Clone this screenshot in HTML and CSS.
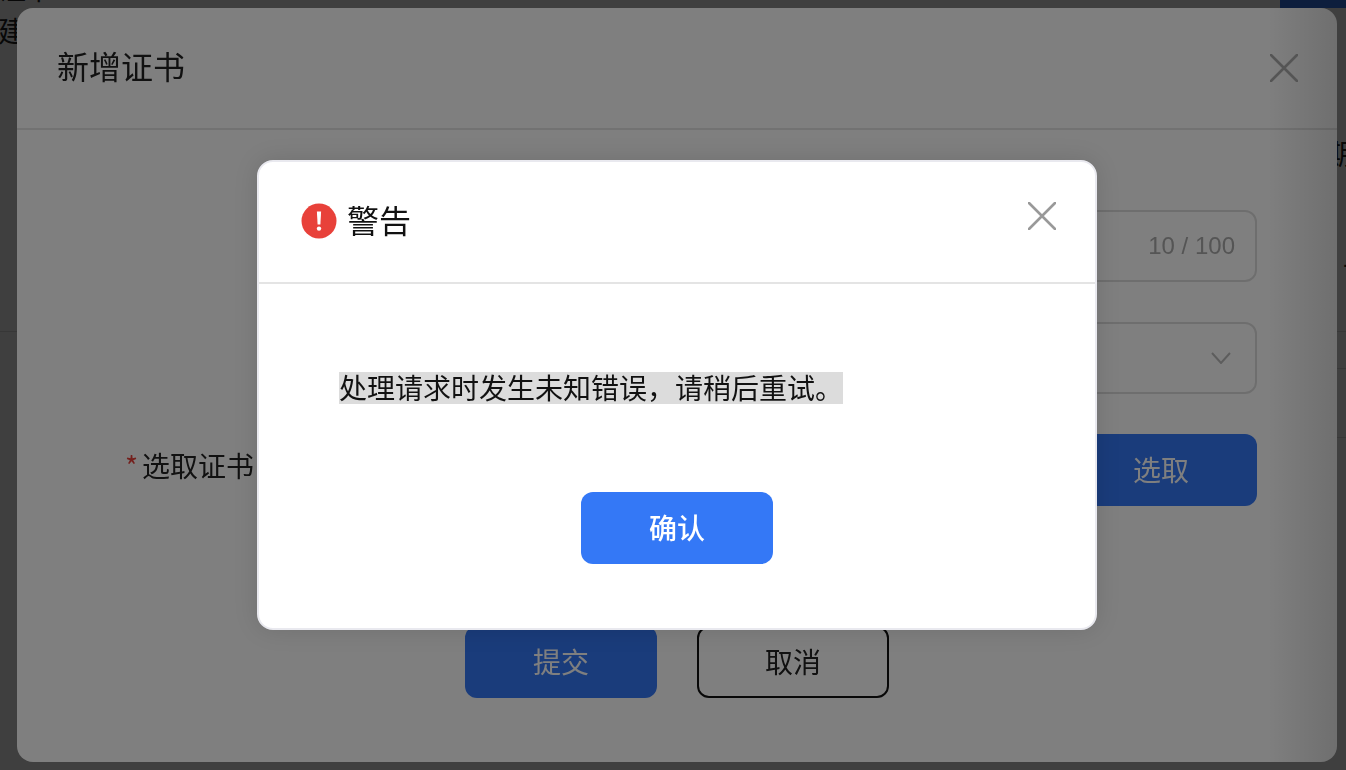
FILE: index.html
```html
<!DOCTYPE html>
<html lang="zh-CN">
<head>
	<meta charset="utf-8">
	<title>新增证书</title>
	<link rel="stylesheet" href="styles.css">
</head>
<body>

<div class="page">
	<div class="page-top">
		<div class="page-crumb">
			<span>证书</span>
			<span>建</span>
		</div>
		<div class="page-side">
			<div class="page-action"></div>
			<span class="page-date">期限</span>
			<span class="page-dash">-</span>
		</div>
	</div>
	<div class="page-list">
		<div class="page-list-row"></div>
		<div class="page-list-row page-list-row-tall"></div>
	</div>
</div>

<div class="mask">
	<div class="modal">
		<div class="modal-header">
			<h2 class="modal-title">新增证书</h2>
			<svg class="close" viewBox="0 0 28 28"><path d="M1 1 27 27M27 1 1 27"/></svg>
		</div>
		<div class="modal-form">
			<div class="form-row">
				<div class="form-label"></div>
				<div class="field">
					<span class="field-count">10 / 100</span>
				</div>
			</div>
			<div class="form-row">
				<div class="form-label"></div>
				<div class="field">
					<svg class="caret" viewBox="0 0 20 12"><path d="M1 1 10 11 19 1"/></svg>
				</div>
			</div>
			<div class="form-row">
				<label class="form-label form-label-required"><span class="required">*</span>选取证书：</label>
				<div class="field-group">
					<div class="field"></div>
					<button class="btn btn-primary">选取</button>
				</div>
			</div>
			<div class="form-actions">
				<button class="btn btn-primary">提交</button>
				<button class="btn btn-outline">取消</button>
			</div>
		</div>
	</div>
</div>

<div class="mask mask-alert">
	<div class="alert">
		<div class="alert-header">
			<svg class="alert-icon" viewBox="0 0 36 36">
				<circle cx="18" cy="18" r="17.5" fill="#e8413a"/>
				<path d="M15.9 8.5h4.2l-.7 13h-2.8z" fill="#fff"/>
				<circle cx="18" cy="25.6" r="2.2" fill="#fff"/>
			</svg>
			<h3 class="alert-title">警告</h3>
			<svg class="close close-alert" viewBox="0 0 28 28"><path d="M1 1 27 27M27 1 1 27"/></svg>
		</div>
		<div class="alert-body">
			<p class="alert-message"><span>处理请求时发生未知错误，请稍后重试。</span></p>
			<button class="btn btn-confirm">确认</button>
		</div>
	</div>
</div>

</body>
</html>
```

FILE: styles.css
```css
/* Reset */

* { margin: 0; padding: 0; box-sizing: border-box; }

html, body {
	height: 100%;
	overflow: hidden;
}

body {
	background-color: white;
	color: #222;
	font-family: "Noto Sans CJK SC", "Liberation Sans", sans-serif;
	font-size: 28px;
}


/* Page behind the dialogs */

.page-top {
	display: flex;
	justify-content: space-between;
	height: 332px;
	border-bottom: solid 1px #ddd;
	overflow: hidden;
}

.page-crumb {
	display: flex;
	flex-direction: column;
	width: 56px;
	margin-left: -2px;
	margin-top: -33px;
	line-height: 42px;
	white-space: nowrap;
}

.page-side {
	display: flex;
	flex-direction: column;
	width: 66px;
	line-height: 32px;
	white-space: nowrap;
}

.page-action {
	height: 8px;
	background-color: #3478f6;
}

.page-date {
	margin-top: 129px;
	margin-left: 45px;
}

.page-dash {
	margin-top: 79px;
	margin-left: 63px;
	font-family: "Liberation Sans", sans-serif;
}

.page-list {
	margin-left: auto;
	width: 20px;
}

.page-list-row {
	height: 37px;
	border-bottom: solid 1px #ddd;
}

.page-list-row-tall {
	height: 69px;
}


/* Masks */

.mask {
	position: fixed;
	top: 0; right: 0; bottom: 0; left: 0;
	background-color: rgba(0, 0, 0, 0.5);
}


/* Certificate dialog */

.modal {
	margin: 8px 9px 8px 17px;
	height: 754px;
	background: linear-gradient(to right, white calc(100% - 70px), #dedede);
	border-radius: 16px;
	overflow: hidden;
}

.modal-header {
	display: flex;
	align-items: center;
	justify-content: space-between;
	height: 122px;
	padding: 0 39px 0 40px;
	border-bottom: solid 2px rgba(0, 0, 0, 0.1);
}

.modal-title {
	font-size: 32px;
	font-weight: 400;
	line-height: 40px;
	margin-top: -6px;
}

.close {
	width: 28px;
	height: 28px;
	fill: none;
	stroke: #aaa;
	stroke-width: 2.6;
	stroke-linecap: round;
}

.modal-form {
	padding: 80px 80px 0 0;
}

.form-row {
	display: flex;
	align-items: center;
	margin-bottom: 40px;
}

.form-label {
	width: 400px;
	flex-shrink: 0;
	padding-left: 108px;
	white-space: nowrap;
	overflow: hidden;
}

.form-label-required {
	margin-top: -10px;
}

.required {
	color: #e8413a;
	margin-right: 4px;
}

.field {
	flex: 1;
	display: flex;
	align-items: center;
	justify-content: flex-end;
	height: 72px;
	padding: 0 20px 0 24px;
	border: solid 2px #ddd;
	border-radius: 12px;
}

.field-count {
	color: #aaa;
	font-family: "Liberation Sans", sans-serif;
	font-size: 24px;
}

.caret {
	width: 20px;
	height: 12px;
	margin-right: 4px;
	fill: none;
	stroke: #bbb;
	stroke-width: 2;
}

.field-group {
	flex: 1;
	display: flex;
	gap: 24px;
}

.form-actions {
	display: flex;
	justify-content: center;
	gap: 40px;
	margin-top: 120px;
	margin-right: -80px;
}


/* Buttons */

.btn {
	width: 192px;
	height: 72px;
	padding-bottom: 2px;
	border: 0;
	border-radius: 12px;
	font-family: inherit;
	font-size: 28px;
	flex-shrink: 0;
}

.btn-primary {
	background-color: #3478f6;
	color: white;
}

.btn-outline {
	background-color: white;
	border: solid 2px #111;
	color: #222;
}

.btn-confirm {
	background-color: #3478f6;
	color: white;
	font-weight: 500;
}


/* Alert */

.mask-alert {
	display: flex;
	justify-content: center;
	align-items: flex-start;
	padding: 160px 0 0 8px;
}

.alert {
	width: 840px;
	height: 470px;
	background-color: white;
	border: solid 2px #e9e9ef;
	border-radius: 16px;
	box-shadow: 0 0 24px rgba(0, 0, 0, 0.12);
}

.alert-header {
	display: flex;
	align-items: center;
	height: 122px;
	padding: 0 39px 0 42px;
	border-bottom: solid 2px #e4e4e4;
}

.alert-icon {
	width: 36px;
	height: 36px;
	margin-top: -2px;
}

.alert-title {
	flex: 1;
	margin-left: 10px;
	margin-top: -6px;
	font-size: 32px;
	font-weight: 400;
	color: #111;
	line-height: 40px;
}

.close-alert {
	margin-top: -12px;
	stroke: #999;
}

.alert-body {
	display: flex;
	flex-direction: column;
	align-items: center;
	padding-top: 88px;
}

.alert-message {
	align-self: flex-start;
	margin-left: 80px;
	height: 32px;
	margin-bottom: 88px;
	line-height: 30px;
}

.alert-message span {
	display: inline-block;
	height: 32px;
	background-color: #dcdcdc;
	color: #111;
}
```
